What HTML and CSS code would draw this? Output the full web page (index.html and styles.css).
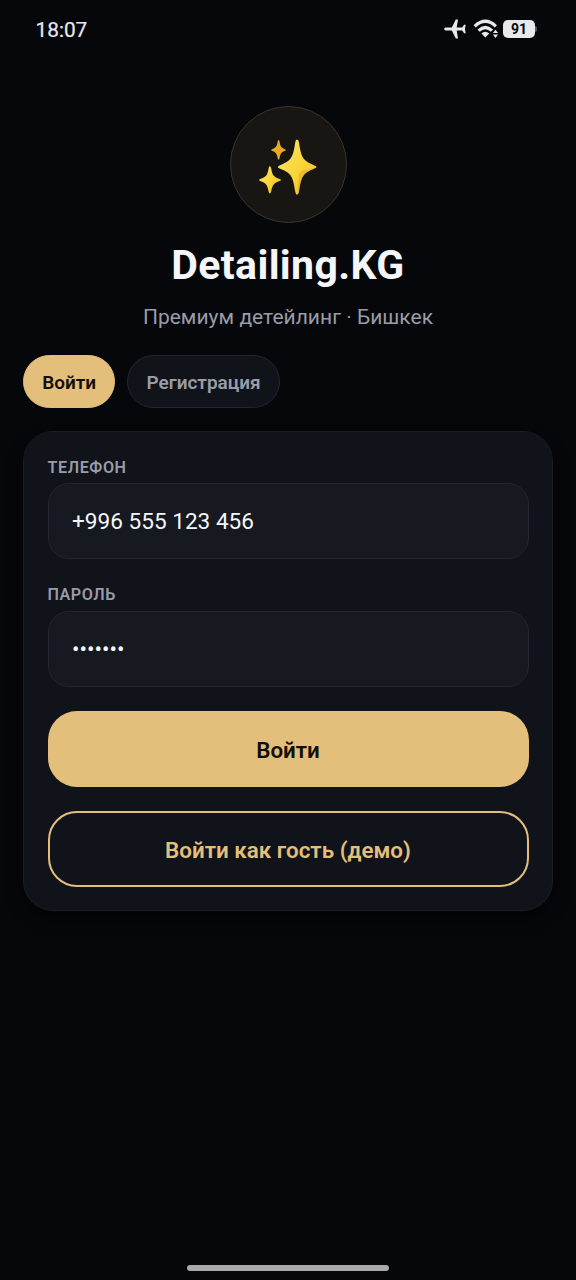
FILE: index.html
```html
<!DOCTYPE html>
<html lang="ru">
<head>
<meta charset="utf-8">
<title>Detailing.KG</title>
<link rel="stylesheet" href="styles.css">
</head>
<body>
<div class="screen">
  <header class="status">
    <span class="time">18:07</span>
    <div class="status-icons">
      <svg class="plane" width="22" height="20" viewBox="0 0 22 20"><path d="M1.600 8.600 H7.800 L11.800 0.400 H14 L12.700 8.400 H18.200 L20.100 5.800 H21.700 L20.900 10 L21.700 14.200 H20.100 L18.200 11.600 H12.700 L14 19.600 H11.800 L7.800 11.400 H1.600 Q0.200 11.200 0.200 10 Q0.200 8.800 1.600 8.600Z"/></svg>
      <svg class="wifi" width="26" height="20" viewBox="0 0 26 20"><path class="arc" d="M1.700 7.300 Q12.300 -2.700 22.900 7.300M5.600 11.700 Q12.300 5.300 19 11.700"/><path d="M8.400 14.400 Q12.300 11 16.200 14.400 L12.300 18.600Z"/><path d="M22.500 10.800 L25.100 14.100 H19.900ZM22.500 18.900 L25.100 15.600 H19.900Z"/></svg>
      <div class="battery">91</div>
    </div>
  </header>
  <div class="logo">
    <svg width="60" height="58" viewBox="0 0 60 58">
      <defs>
        <linearGradient id="gold" x1="0" y1="0" x2="1" y2="1"><stop offset="0" stop-color="#fbe66c"/><stop offset=".55" stop-color="#f9d438"/><stop offset="1" stop-color="#ecb52b"/></linearGradient>
      </defs>
      <path fill="url(#gold)" d="M39 1.500 Q40.500 1.500 41 4.500 C43.300 20 45 22.500 56 27.200 Q58.600 28.400 58.600 29 Q58.600 29.800 56 30.800 C45 35.200 43.300 38 41 53.500 Q40.300 56.800 39 56.800 Q37.700 56.800 37.200 53.500 C35 38 33 35 22 30.800 Q19.800 29.800 19.800 29 Q19.800 28.300 22 27.200 C33 22.800 35 20 37.200 4.500 Q37.500 1.500 39 1.500Z"/>
      <path fill="#e5b02a" opacity=".7" d="M56 30.800 C45 35.200 43.300 38 41 53.500 L39.700 56 C40.500 44 40 39 41.500 35 C44 32 50 31 56 30.800Z"/>
      <path fill="url(#gold)" d="M11.800 28.300 Q12.800 28.300 13.200 30.500 C14.500 37.500 15.500 38.500 21 40.700 Q23.200 41.500 23.200 42 Q23.200 42.500 21 43.300 C15.500 45.500 14.500 47 13.200 53.500 Q12.700 55.500 11.800 55.500 Q11 55.500 10.600 53.500 C9.300 47 8.500 45.500 2.800 43.300 Q1 42.500 1 42 Q1 41.500 2.800 40.700 C8.500 38.500 9.300 37.500 10.600 30.500 Q10.900 28.300 11.800 28.300Z"/>
      <path fill="#e8a928" d="M20.500 2 Q21.300 2 21.600 4 C22.400 8.500 23 9.500 26.500 10.900 Q28.100 11.600 28.100 12 Q28.100 12.400 26.500 13 C23 14.500 22.400 15.500 21.600 20 Q21.200 21.700 20.500 21.700 Q19.900 21.700 19.600 20 C18.800 15.500 18 14.500 14.500 13 Q13 12.400 13 12 Q13 11.600 14.500 10.900 C18 9.500 18.800 8.500 19.600 4 Q19.900 2 20.500 2Z"/>
    </svg>
  </div>
  <h1 class="title">Detailing.KG</h1>
  <p class="subtitle">Премиум детейлинг · Бишкек</p>
  <nav class="tabs">
    <button class="tab active">Войти</button>
    <button class="tab">Регистрация</button>
  </nav>
  <main class="card">
    <div class="label">ТЕЛЕФОН</div>
    <div class="field">+996 555 123 456</div>
    <div class="label second">ПАРОЛЬ</div>
    <div class="field password">•••••••</div>
    <button class="btn primary">Войти</button>
    <button class="btn outline">Войти как гость (демо)</button>
  </main>
  <div class="home-bar"></div>
</div>
</body>
</html>
```
FILE: styles.css
```css
* { box-sizing: border-box; }
body { margin: 0; background: #06070b; font-family: Roboto, "Noto Sans", sans-serif; color: #f5f6fa; }
button { font-family: inherit; margin: 0; }
.screen { height: 1280px; padding: 0 23px 9px; display: flex; flex-direction: column; overflow: hidden; }
.status { height: 58px; padding: 0 16px 0 12.5px; display: flex; justify-content: space-between; align-items: center; flex: none; }
.time { font-size: 20.8px; line-height: 24px; padding-top: 1px; color: #e8e9ed; -webkit-text-stroke: .2px #e8e9ed; }
.status-icons { display: flex; align-items: center; fill: #e8e9ed; }
.plane { margin-right: 7px; }
.wifi { margin-right: 4px; }
.arc { fill: none; stroke: #e8e9ed; stroke-width: 3.2; }
.battery { position: relative; width: 32px; height: 18px; border-radius: 5px; background: #e8e9ed; color: #06070b; font-size: 14px; font-weight: 700; line-height: 18px; text-align: center; margin-right: 2px; }
.battery::after { content: ""; position: absolute; right: -2px; top: 6px; width: 2px; height: 6px; background: #57585c; border-radius: 0 2px 2px 0; }
.logo { flex: none; width: 117px; height: 117px; margin: 48px auto 0; border: 1.5px solid #3b342a; border-radius: 50%; background: #181613; display: flex; align-items: center; justify-content: center; padding-top: 4px; }
.title { margin: 18px 0 0; font-size: 41px; line-height: 48px; font-weight: 700; letter-spacing: .37px; text-align: center; }
.subtitle { margin: 16px 0 0; font-size: 21px; line-height: 24px; letter-spacing: .02px; color: #9a9ca7; text-align: center; }
.tabs { display: flex; gap: 12px; margin-top: 26px; }
.tab { height: 53px; padding: 1px 18px 0; border: 1.5px solid #22262e; border-radius: 27px; background: #10131a; color: #9a9ca7; font-size: 19px; font-weight: 600; }
.tab.active { padding: 1px 18.2px 0; background: #e3bf7b; border-color: #e3bf7b; color: #140d06; }
.card { margin-top: 23px; height: 480px; padding: 25.5px 23.5px 0; background: #10131a; border: 1px solid #1a1d24; border-radius: 30px; display: flex; flex-direction: column; box-shadow: 0 8px 16px rgba(0,0,0,.5); }
.label { font-size: 16.1px; line-height: 20px; font-weight: 600; letter-spacing: .6px; color: #9a9ca7; }
.label.second { margin-top: 26px; }
.field { margin-top: 5.5px; height: 76px; padding: 0 23.5px; border: 1.5px solid #22262e; border-radius: 21px; background: #161920; font-size: 22.6px; line-height: 75px; }
.label.second + .field { margin-top: 6px; }
.password { font-size: 22.2px; }
.btn { height: 76px; margin-top: 24px; border-radius: 29px; font-size: 22.4px; font-weight: 600; padding: 1px 0 0; }
.primary { border: 0; background: #e3bf7b; color: #140d06; }
.outline { border: 2px solid #e3bf7b; background: transparent; color: #e3bf7b; }
.home-bar { width: 202px; height: 6px; margin: auto auto 0; border-radius: 3px; background: #a9a8ad; }
```
